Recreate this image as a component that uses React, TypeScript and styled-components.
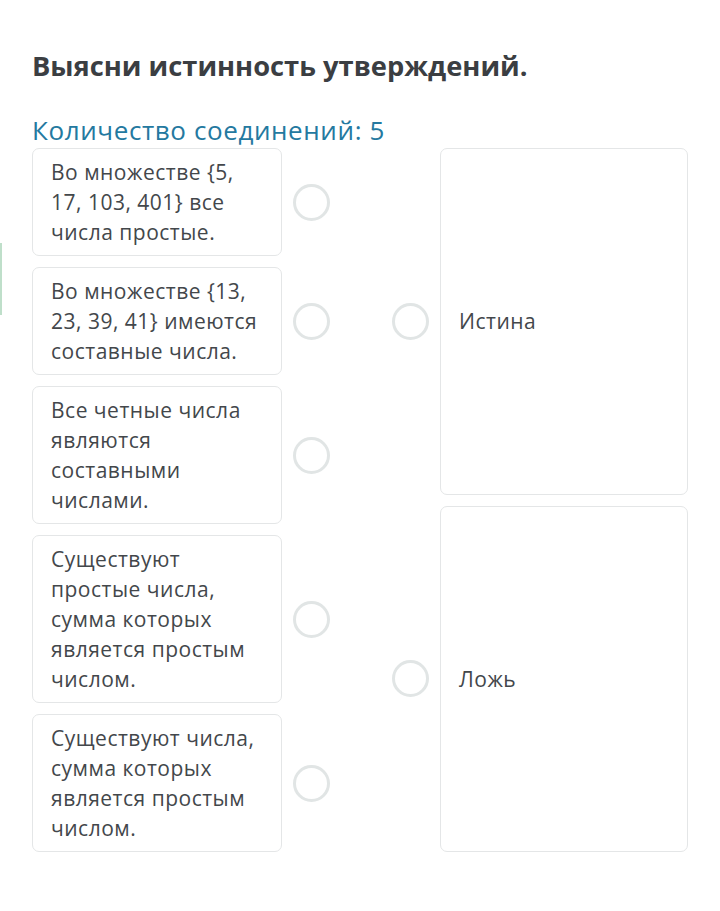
import React from "react";
import styled, { createGlobalStyle } from "styled-components";

const GlobalStyle = createGlobalStyle`
  html, body {
    margin: 0;
    padding: 0;
    background: #ffffff;
  }
  body {
    font-family: "Open Sans", "Noto Sans", "Liberation Sans", sans-serif;
    color: #3f4347;
  }
`;

const Page = styled.div`
  position: relative;
  width: 720px;
  min-height: 911px;
  box-sizing: border-box;
  padding: 47px 32px 0 32px;
`;

const EdgeMark = styled.div`
  position: absolute;
  left: 0;
  top: 243px;
  width: 2px;
  height: 72px;
  background: #bfdfca;
`;

const Title = styled.h1`
  margin: 0;
  font-size: 27.3px;
  line-height: 38px;
  font-weight: 700;
  color: #3b3e42;
`;

const Counter = styled.div`
  margin-top: 27px;
  font-size: 26px;
  line-height: 36px;
  letter-spacing: 0.6px;
  color: #2479a0;
`;

const Board = styled.div`
  display: flex;
  justify-content: space-between;
  align-items: stretch;
`;

const Column = styled.div`
  display: flex;
  flex-direction: column;
  gap: 11px;
`;

const Row = styled.div<{ $grow?: boolean }>`
  display: flex;
  align-items: center;
  gap: 11px;
  flex: ${(p) => (p.$grow ? "1 1 0" : "0 0 auto")};
`;

const Card = styled.div<{ $wide?: boolean }>`
  box-sizing: border-box;
  width: ${(p) => (p.$wide ? "248px" : "250px")};
  align-self: stretch;
  display: flex;
  align-items: center;
  padding: 8px 20px 8px 18px;
  border: 1px solid #e4e6e7;
  border-radius: 7px;
  background: #ffffff;
  font-size: 21px;
  line-height: 30px;
  letter-spacing: 0.5px;
  color: #43474b;
`;

const Dot = styled.span`
  flex: 0 0 auto;
  box-sizing: border-box;
  width: 37px;
  height: 37px;
  border-radius: 50%;
  border: 3px solid #e1e5e5;
  background: #ffffff;
`;

const statements = [
  "Во множестве {5, 17, 103, 401} все числа простые.",
  "Во множестве {13, 23, 39, 41} имеются составные числа.",
  "Все четные числа являются составными числами.",
  "Существуют простые числа, сумма которых является простым числом.",
  "Существуют числа, сумма которых является простым числом.",
];

const answers = ["Истина", "Ложь"];

export default function App() {
  return (
    <>
      <GlobalStyle />
      <Page>
        <EdgeMark />
        <Title>Выясни истинность утверждений.</Title>
        <Counter>Количество соединений: 5</Counter>
        <Board>
          <Column>
            {statements.map((s) => (
              <Row key={s}>
                <Card>{s}</Card>
                <Dot />
              </Row>
            ))}
          </Column>
          <Column>
            {answers.map((a) => (
              <Row key={a} $grow>
                <Dot />
                <Card $wide>{a}</Card>
              </Row>
            ))}
          </Column>
        </Board>
      </Page>
    </>
  );
}
